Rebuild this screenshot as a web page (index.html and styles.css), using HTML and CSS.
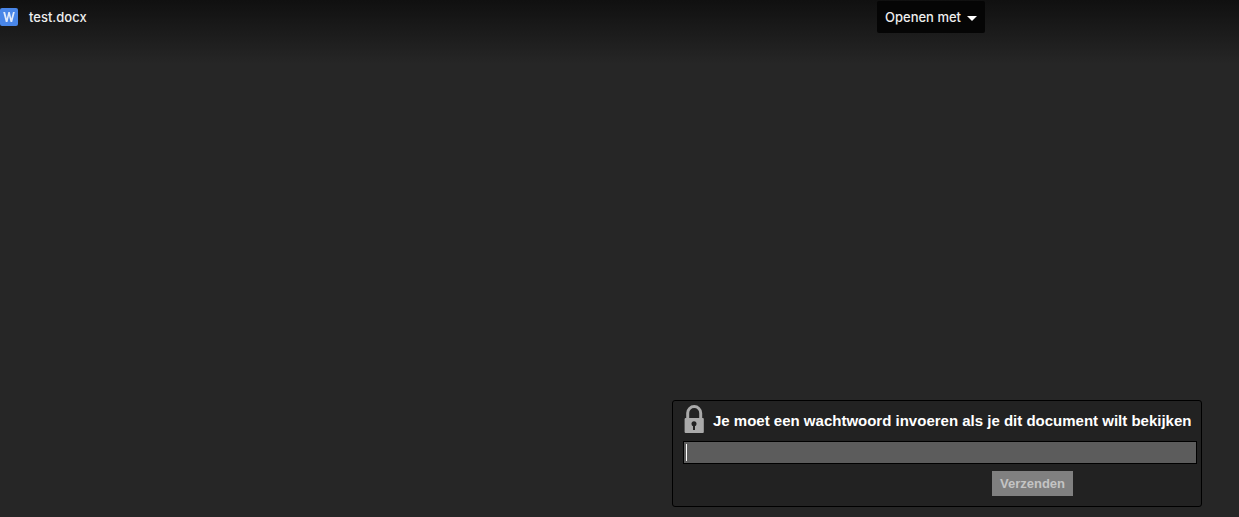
FILE: index.html
```html
<!DOCTYPE html>
<html lang="nl">
<head>
    <meta charset="UTF-8">
    <meta name="viewport" content="width=device-width, initial-scale=1.0">
    <title>test.docx</title>
    <link rel="stylesheet" href="styles.css">
</head>
<body>
    <header class="toolbar">
        <svg class="file-icon" viewBox="0 0 18 18" aria-hidden="true">
            <rect width="18" height="18" rx="2" fill="#4986e8"/>
            <path d="M3.2 4h1.9l1.7 6.6L8.3 4h1.5l1.5 6.6L13 4h1.8l-2.6 10h-1.7L9 7.8 7.5 14H5.8z" fill="#e0eafb"/>
        </svg>
        <span class="file-name">test.docx</span>
        <button type="button" class="open-with">
            Openen met
            <svg class="arrow" viewBox="0 0 10 5" aria-hidden="true">
                <path d="M0 0h10L5 5z" fill="#fff"/>
            </svg>
        </button>
    </header>

    <main class="viewer">
        <form class="password-box">
            <label class="title" for="password">
                <svg class="lock" viewBox="0 0 20 28" aria-hidden="true">
                    <path d="M3.7 14V8a6.5 6.4 0 0 1 13 0v6" fill="none" stroke="#aaa" stroke-width="3"/>
                    <rect x="0.6" y="13" width="19.2" height="15" rx="1" fill="#aaa"/>
                    <circle cx="10" cy="18.7" r="2.5" fill="#222"/>
                    <path d="M9 19h2v6H9z" fill="#222"/>
                </svg>
                <span class="title-text">Je moet een wachtwoord invoeren als je dit document wilt bekijken</span>
            </label>
            <input type="password" id="password" class="password">
            <button type="submit" class="send" disabled>Verzenden</button>
        </form>
    </main>
</body>
</html>
```

FILE: styles.css
```css
* {
    box-sizing: border-box;
}
body {
    margin: 0;
    min-height: 100vh;
    display: flex;
    flex-direction: column;
    background: #262626 linear-gradient(#101010, #262626) no-repeat 0 0 / 100% 64px;
    font-family: "Liberation Sans", Arial, sans-serif;
    color: #fff;
}
.toolbar {
    display: flex;
    align-items: center;
    height: 34px;
    padding-right: 254px;
    font-family: Inter, sans-serif;
    font-size: 13px;
    font-weight: 500;
}
.file-icon {
    width: 18px;
    height: 18px;
    margin-right: 11px;
}
.file-name {
    color: #eee;
}
.open-with {
    display: flex;
    align-items: center;
    justify-content: space-between;
    width: 108px;
    height: 32px;
    margin-left: auto;
    padding: 0 8px;
    border: none;
    border-radius: 2px;
    background: #050505;
    color: #eee;
    font: inherit;
    cursor: pointer;
}
.arrow {
    width: 10px;
    height: 5px;
    margin-top: 2px;
}
.viewer {
    flex: 1;
    display: flex;
    justify-content: flex-end;
    align-items: flex-end;
    padding: 0 37px 10px;
}
.password-box {
    display: flex;
    flex-direction: column;
    width: 530px;
    padding: 4px 4px 10px 10px;
    border: 1px solid #000;
    border-radius: 3px;
    background: #222;
}
.title {
    display: flex;
    align-items: center;
    gap: 9px;
    height: 28px;
    padding-left: 1px;
    font-size: 15px;
    font-weight: bold;
    white-space: nowrap;
}
.title-text {
    padding-top: 2px;
}
.lock {
    width: 20px;
    height: 28px;
}
/* the thin white line is the text cursor */
.password {
    width: 100%;
    height: 23px;
    margin: 8px 0 7px;
    padding: 0 2px;
    border: 1px solid #000;
    background: #5c5c5c linear-gradient(#fff, #fff) no-repeat 2px 2px / 1px 17px;
    color: #fff;
    outline: none;
}
.send {
    align-self: flex-end;
    height: 25px;
    margin-right: 124px;
    padding: 0 8px;
    border: none;
    background: #808080;
    color: #c4c4c4;
    font: bold 13px "Liberation Sans", Arial, sans-serif;
}
```
